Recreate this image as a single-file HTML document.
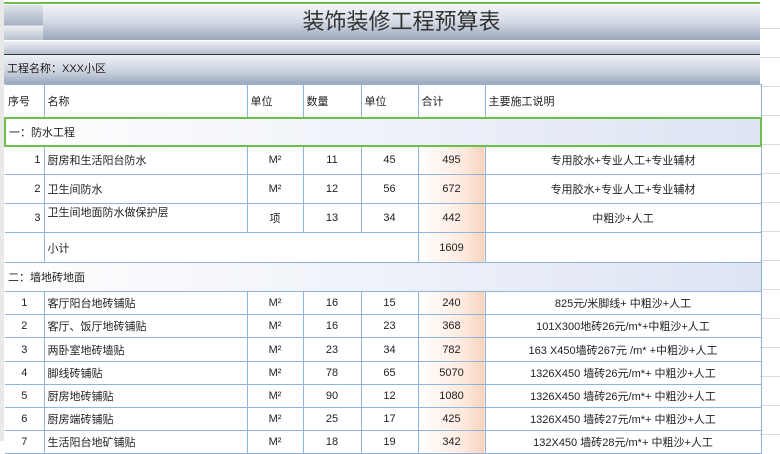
<!DOCTYPE html>
<html><head><meta charset="utf-8"><style>
body{margin:0;width:780px;height:441px;overflow:hidden;background:#fff;font-family:"Liberation Sans","Noto Sans CJK SC",sans-serif;position:relative}
.abs{position:absolute}
table{position:absolute;left:4px;top:84px;border-collapse:collapse;table-layout:fixed;font-size:11px;color:#222}
td{border:1px solid #8fb4e0;padding:0 3px;white-space:nowrap;overflow:hidden}
.c{text-align:center}.r{text-align:right}
.sum{background:linear-gradient(90deg,#fff 0%,#fde9dd 70%,#f8d2bb 100%);text-align:center}
.sec{background:linear-gradient(90deg,#fff,#dde4f3);border-left:none}
</style></head><body>
<div class="abs" style="left:0;top:0;width:780px;height:3px;background:#fff"></div>
<div class="abs" style="left:4px;top:2px;width:756px;height:2px;background:#6cbf4a"></div>
<div class="abs" style="left:760px;top:0;width:20px;height:441px;background:repeating-linear-gradient(180deg,#fff 0 28px,#ddd 28px 29px)"></div>
<div class="abs" style="left:0;top:0;width:4px;height:441px;background:#e8e8e8"></div>
<div class="abs" style="left:4px;top:5px;width:756px;height:35px;background:linear-gradient(180deg,#f2f4f8,#d3d9e4 50%,#98a5bb)"></div>
<div class="abs" style="left:4px;top:5px;width:39px;height:20px;background:linear-gradient(180deg,#dfe3ea,#a8b3c6)"></div>
<div class="abs" style="left:4px;top:26px;width:39px;height:14px;background:linear-gradient(180deg,#eef0f4,#b7c0cf)"></div>
<div class="abs" style="left:43px;top:7px;width:717px;text-align:center;font-size:22px;color:#333;line-height:30px">装饰装修工程预算表</div>
<div class="abs" style="left:4px;top:41px;width:756px;height:13px;background:linear-gradient(180deg,#eef1f5,#b7c0cf)"></div>
<div class="abs" style="left:4px;top:54px;width:756px;height:1px;background:#333"></div>
<div class="abs" style="left:4px;top:55px;width:756px;height:29px;background:linear-gradient(180deg,#eef1f6,#c9d0dc 60%,#9aa8bd);font-size:11px;line-height:29px;color:#222"><span style="padding-left:3px">工程名称：XXX小区</span></div>
<table>
<colgroup><col style="width:39px"><col style="width:203px"><col style="width:56px"><col style="width:58px"><col style="width:57px"><col style="width:67px"><col style="width:276px"></colgroup>
<tr style="height:33px"><td style="border-left:none">序号</td><td>名称</td><td>单位</td><td>数量</td><td>单位</td><td>合计</td><td>主要施工说明</td></tr>
<tr style="height:28px"><td colspan="7" class="sec" style="border:2px solid #6cbf4a">一：防水工程</td></tr>
<tr style="height:29px"><td class="r" style="border-left:none">1</td><td>厨房和生活阳台防水</td><td class="c">M²</td><td class="c">11</td><td class="c">45</td><td class="sum">495</td><td class="c">专用胶水+专业人工+专业辅材</td></tr>
<tr style="height:29px"><td class="r" style="border-left:none">2</td><td>卫生间防水</td><td class="c">M²</td><td class="c">12</td><td class="c">56</td><td class="sum">672</td><td class="c">专用胶水+专业人工+专业辅材</td></tr>
<tr style="height:29px"><td class="r" style="border-left:none">3</td><td style="vertical-align:top">卫生间地面防水做保护层</td><td class="c">项</td><td class="c">13</td><td class="c">34</td><td class="sum">442</td><td class="c">中粗沙+人工</td></tr>
<tr style="height:30px"><td style="border-left:none"></td><td colspan="4" style="border-right:none">小计</td><td class="sum">1609</td><td></td></tr>
<tr style="height:29px"><td colspan="7" class="sec">二：墙地砖地面</td></tr>
<tr style="height:23px"><td class="c" style="border-left:none">1</td><td>客厅阳台地砖铺贴</td><td class="c">M²</td><td class="c">16</td><td class="c">15</td><td class="sum">240</td><td class="c">825元/米脚线+ 中粗沙+人工</td></tr>
<tr style="height:23px"><td class="c" style="border-left:none">2</td><td>客厅、饭厅地砖铺贴</td><td class="c">M²</td><td class="c">16</td><td class="c">23</td><td class="sum">368</td><td class="c">101X300地砖26元/m*+中粗沙+人工</td></tr>
<tr style="height:24px"><td class="c" style="border-left:none">3</td><td>两卧室地砖墙贴</td><td class="c">M²</td><td class="c">23</td><td class="c">34</td><td class="sum">782</td><td class="c">163 X450墙砖267元 /m* +中粗沙+人工</td></tr>
<tr style="height:23px"><td class="c" style="border-left:none">4</td><td>脚线砖铺贴</td><td class="c">M²</td><td class="c">78</td><td class="c">65</td><td class="sum">5070</td><td class="c">1326X450 墙砖26元/m*+ 中粗沙+人工</td></tr>
<tr style="height:23px"><td class="c" style="border-left:none">5</td><td>厨房地砖铺贴</td><td class="c">M²</td><td class="c">90</td><td class="c">12</td><td class="sum">1080</td><td class="c">1326X450 墙砖26元/m*+ 中粗沙+人工</td></tr>
<tr style="height:23px"><td class="c" style="border-left:none">6</td><td>厨房端砖铺贴</td><td class="c">M²</td><td class="c">25</td><td class="c">17</td><td class="sum">425</td><td class="c">1326X450 墙砖27元/m*+ 中粗沙+人工</td></tr>
<tr style="height:23px"><td class="c" style="border-left:none">7</td><td>生活阳台地矿铺贴</td><td class="c">M²</td><td class="c">18</td><td class="c">19</td><td class="sum">342</td><td class="c">132X450 墙砖28元/m*+ 中粗沙+人工</td></tr>
</table>
</body></html>
